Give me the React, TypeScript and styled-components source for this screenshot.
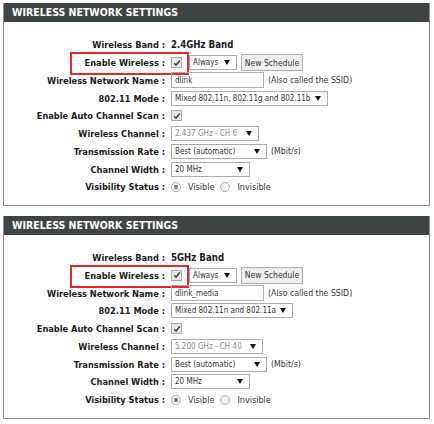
import styled, { createGlobalStyle } from 'styled-components';

const GlobalStyle = createGlobalStyle`
  html, body {
    margin: 0;
    padding: 0;
    background: #ffffff;
  }
  body {
    font-family: "DejaVu Sans Condensed", "DejaVu Sans", sans-serif;
    color: #222;
  }
`;

type Band = {
  band: string;
  ssid: string;
  mode: string;
  modeWidth: number;
  channel: string;
  channelWidth: number;
};

const bands: Band[] = [
  {
    band: '2.4GHz Band',
    ssid: 'dlink',
    mode: 'Mixed 802.11n, 802.11g and 802.11b',
    modeWidth: 157,
    channel: '2.437 GHz - CH 6',
    channelWidth: 88,
  },
  {
    band: '5GHz Band',
    ssid: 'dlink_media',
    mode: 'Mixed 802.11n and 802.11a',
    modeWidth: 122,
    channel: '5.200 GHz - CH 40',
    channelWidth: 92,
  },
];

// one settings block per radio band
const WirelessSettings = ({ data }: { data: Band }) => {
  return (
    <Panel>
      <Header>WIRELESS NETWORK SETTINGS</Header>
      <Body>
        <Row>
          <Label>Wireless Band :</Label>
          <Value><BandText>{data.band}</BandText></Value>
        </Row>
        <Row>
          <Highlight />
          <Label>Enable Wireless :</Label>
          <Value>
            <CheckBox />
            <Select width={48}>Always</Select>
            <Button>New Schedule</Button>
          </Value>
        </Row>
        <Row>
          <Label>Wireless Network Name :</Label>
          <Value>
            <TextInput>{data.ssid}</TextInput>
            <Note>(Also called the SSID)</Note>
          </Value>
        </Row>
        <Row>
          <Label>802.11 Mode :</Label>
          <Value><Select width={data.modeWidth}>{data.mode}</Select></Value>
        </Row>
        <Row>
          <Label>Enable Auto Channel Scan :</Label>
          <Value><CheckBox /></Value>
        </Row>
        <Row>
          <Label>Wireless Channel :</Label>
          <Value><Select width={data.channelWidth} disabled>{data.channel}</Select></Value>
        </Row>
        <Row>
          <Label>Transmission Rate :</Label>
          <Value>
            <Select width={96}>Best (automatic)</Select>
            <Note>(Mbit/s)</Note>
          </Value>
        </Row>
        <Row>
          <Label>Channel Width :</Label>
          <Value><Select width={79}>20 MHz</Select></Value>
        </Row>
        <Row>
          <Label>Visibility Status :</Label>
          <Value>
            <Radio checked />
            <RadioText>Visible</RadioText>
            <Radio />
            <RadioText>Invisible</RadioText>
          </Value>
        </Row>
      </Body>
    </Panel>
  );
};

const CheckBox = () => (
  <Check>
    <svg width="8" height="8" viewBox="0 0 8 8">
      <path d="M1.2 4.3 L3 6.1 L6.8 1.6" fill="none" stroke="#444" strokeWidth="1.5" />
    </svg>
  </Check>
);

const Select = ({ width, disabled, children }: {
  width: number;
  disabled?: boolean;
  children: React.ReactNode;
}) => (
  <SelectBox style={{ width }} $disabled={disabled}>
    <span>{children}</span>
    <Arrow />
  </SelectBox>
);

export default function App() {
  return (
    <>
      <GlobalStyle />
      <Page>
        {bands.map(b => <WirelessSettings key={b.band} data={b} />)}
      </Page>
    </>
  );
}

const Page = styled.div`
  display: flex;
  flex-direction: column;
  gap: 10px;
  padding: 3px 4px 0 3px;
`;

const Panel = styled.section`
  border: 1px solid #8a8a8a;
  border-top: none;
  background: #fff;
`;

const Header = styled.div`
  height: 19px;
  background: #3f4444;
  color: #fff;
  font-family: "DejaVu Sans Condensed", "DejaVu Sans", sans-serif;
  font-weight: bold;
  font-size: 10.5px;
  line-height: 19px;
  padding-left: 8px;
`;

const Body = styled.div`
  padding: 14px 0 9px 0;
`;

const Row = styled.div`
  position: relative;
  display: grid;
  grid-template-columns: 161px 1fr;
  column-gap: 6px;
  align-items: center;
  height: 17.75px;
`;

const Highlight = styled.div`
  position: absolute;
  left: 66px;
  top: -2px;
  width: 115px;
  height: 19px;
  border: 2px solid #e5252b;
`;

const Label = styled.div`
  text-align: right;
  font-weight: bold;
  font-size: 9.2px;
  color: #1a1a1a;
  white-space: nowrap;
`;

const Value = styled.div`
  display: flex;
  align-items: center;
  font-size: 8px;
  white-space: nowrap;
`;

const BandText = styled.span`
  font-weight: bold;
  font-size: 9.6px;
  color: #1a1a1a;
`;

const Check = styled.span`
  display: inline-flex;
  align-items: center;
  justify-content: center;
  width: 9px;
  height: 9px;
  border: 1px solid #a8a8a8;
  background: #e8e8e8;
  margin-right: 7px;
`;

const SelectBox = styled.div<{ $disabled?: boolean }>`
  box-sizing: border-box;
  height: 15px;
  border: 1px solid #aaa;
  background: #fff;
  color: ${p => (p.$disabled ? '#8a8a8a' : '#333')};
  display: flex;
  align-items: center;
  justify-content: space-between;
  padding: 0 6px 0 3px;
`;

const Arrow = styled.span`
  width: 0;
  height: 0;
  border-left: 3px solid transparent;
  border-right: 3px solid transparent;
  border-top: 5px solid #111;
`;

const Button = styled.div`
  box-sizing: border-box;
  margin-left: 4px;
  height: 17px;
  width: 62px;
  border: 1px solid #adadad;
  background: #eeeeee;
  color: #333;
  font-size: 8.5px;
  display: flex;
  align-items: center;
  justify-content: center;
`;

const TextInput = styled.div`
  box-sizing: border-box;
  width: 93px;
  height: 16px;
  border: 1px solid #b0b0b0;
  padding-left: 3px;
  display: flex;
  align-items: center;
  color: #333;
`;

const Note = styled.span`
  margin-left: 4px;
  font-size: 8.7px;
  color: #333;
`;

const Radio = styled.span<{ checked?: boolean }>`
  box-sizing: border-box;
  width: 10px;
  height: 10px;
  border-radius: 50%;
  border: 1px solid #b0b0b0;
  background: ${p => (p.checked ? 'radial-gradient(circle, #8a8a8a 0 2px, #f0f0f0 2.5px)' : '#f0f0f0')};
`;

const RadioText = styled.span`
  margin: 0 6px 0 7px;
  font-size: 9px;
  color: #333;
`;
